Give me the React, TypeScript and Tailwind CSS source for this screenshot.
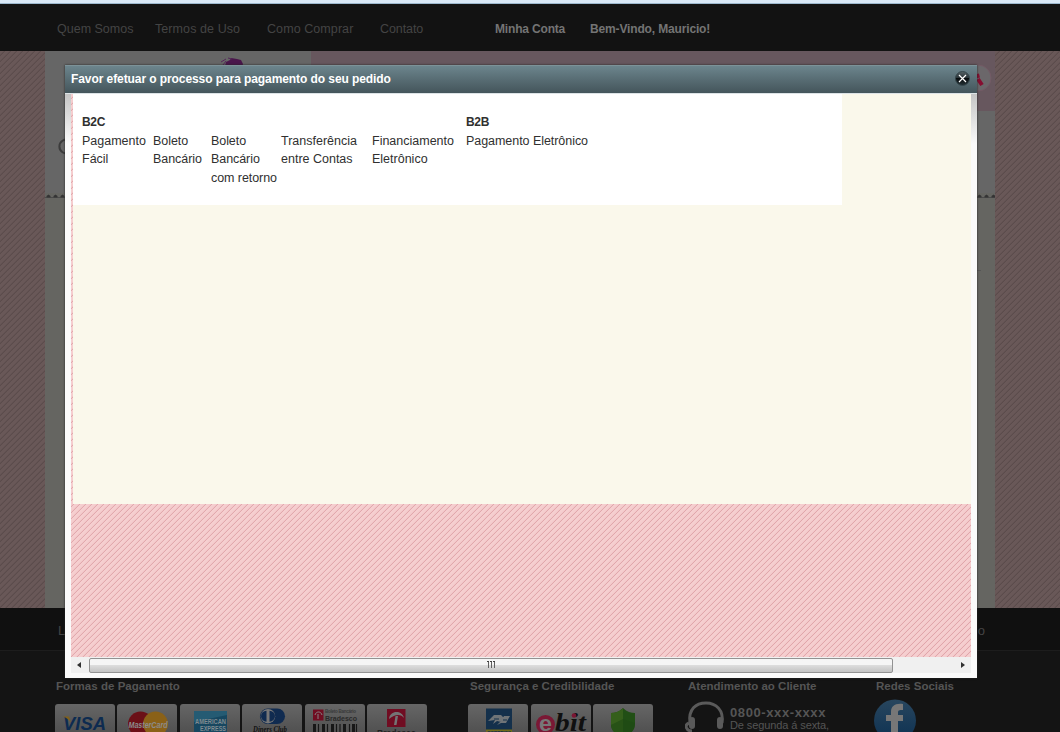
import type { ReactNode } from "react";

const darkStripes =
  "bg-[repeating-linear-gradient(135deg,#695858_0px,#695858_2.4px,#594a4a_3.4px,#695858_4.243px)]";
const pinkStripes =
  "bg-[repeating-linear-gradient(135deg,#f6d0d1_0px,#f4cccd_2.7px,#dfa3a8_3.4px,#f6d0d1_4.243px)]";

function Card({ children }: { children: ReactNode }) {
  return (
    <div className="h-[40px] w-[60px] shrink-0 overflow-hidden rounded-[3px] bg-linear-to-b from-[#666666] to-[#484848]">
      <svg width="60" height="40" viewBox="0 0 60 40" fontFamily="Liberation Sans, sans-serif">
        {children}
      </svg>
    </div>
  );
}

function Scallops() {
  return (
    <svg width="950" height="6" className="block">
      <defs>
        <pattern id="scallop" width="7" height="6" patternUnits="userSpaceOnUse">
          <path d="M0 4.5h7" stroke="#4a4a4a" />
          <path d="M1.500 4.500V3l2-1.500L5.500 3v1.500z" fill="#343434" />
        </pattern>
      </defs>
      <rect width="950" height="6" fill="url(#scallop)" />
    </svg>
  );
}

function PaymentCards() {
  return (
    <div className="flex gap-[2.4px]">
      <Card>
        <text x="8" y="25.500" fontSize="18.500" fontWeight="bold" fontStyle="italic" fill="#0d2b50" textLength="43" lengthAdjust="spacingAndGlyphs">VISA</text>
        <path d="M8 12.500h6l2 6c-2-3-5-5-8-6z" fill="#80601a" />
      </Card>
      <Card>
        <circle cx="23.500" cy="20" r="12.500" fill="#6b1017" />
        <circle cx="38.500" cy="20" r="12.500" fill="#8a6118" />
        <text x="11.500" y="23.500" fontSize="9.500" fontWeight="bold" fontStyle="italic" fill="#8c8c8c" textLength="39" lengthAdjust="spacingAndGlyphs">MasterCard</text>
      </Card>
      <Card>
        <rect x="14" y="7" width="33" height="30" fill="#174760" />
        <path d="M14 7h33v4L14 18z" fill="#255b73" />
        <text x="15" y="20" fontSize="7" fontWeight="bold" fill="#7f8b90" textLength="31" lengthAdjust="spacingAndGlyphs">AMERICAN</text>
        <text x="20" y="26.500" fontSize="7" fontWeight="bold" fill="#7f8b90" textLength="26" lengthAdjust="spacingAndGlyphs">EXPRESS</text>
      </Card>
      <Card>
        <rect x="18" y="4.500" width="25" height="15.500" rx="7.750" fill="#102b50" />
        <circle cx="26" cy="12.200" r="7.200" fill="#777777" />
        <path d="M24.500 6.700a5.500 5.500 0 0 0 0 11zM27.500 6.700a5.500 5.500 0 0 1 0 11z" fill="#102b50" />
        <text x="11" y="27.500" fontSize="8.500" fontStyle="italic" fill="#101010" fontFamily="Liberation Serif, serif" textLength="34" lengthAdjust="spacingAndGlyphs">Diners Club</text>
      </Card>
      <Card>
        <rect x="8" y="5.500" width="10.500" height="11" fill="#700d22" />
        <path d="M10 11c1-4 6-4 7 0M13 15v-5" fill="none" stroke="#858585" />
        <text x="20" y="9" fontSize="4.500" fill="#393939" textLength="31">Boleto Bancário</text>
        <text x="20" y="16.500" fontSize="8" fontWeight="bold" fill="#292929" textLength="32" lengthAdjust="spacingAndGlyphs">Bradesco</text>
        <path d="M9.500 20v20M18.500 20v20M27.500 20v20M39.500 20v20M48.500 20v20" stroke="#171717" strokeWidth="3" />
        <path d="M13.500 20v20M22.500 20v20M31.500 20v20M35 20v20M44.500 20v20M51.500 20v20" stroke="#171717" strokeWidth="1.200" />
      </Card>
      <Card>
        <rect x="20" y="5" width="18.500" height="18" fill="#700d22" />
        <path d="M22 15c1-9 13-9 15-1-3-4-9-4-15 1zM28.500 12h2.500l-1.500 9h-2.500z" fill="#747474" />
        <text x="10" y="31.500" fontSize="9" fontWeight="bold" fill="#202020" textLength="39" lengthAdjust="spacingAndGlyphs">Bradesco</text>
      </Card>
    </div>
  );
}

function SecurityCards() {
  return (
    <div className="flex gap-[2.5px]">
      <Card>
        <rect x="18" y="4.500" width="26" height="21.500" fill="#14304b" />
        <path d="M20 17l6-6h7l3 3-3 4-4-1-4 3 2-4zM29 21l4-4 3-5h6l-4 7h-5z" fill="#6f7477" />
        <path d="M26 15h5M35 16h4" stroke="#14304b" />
        <rect x="18" y="25.500" width="26" height="14" fill="#706b1a" />
        <text x="19" y="31" fontSize="5" fontWeight="bold" fill="#172e46" textLength="24">CORREIOS</text>
      </Card>
      <Card>
        <circle cx="14.500" cy="20.500" r="9.500" fill="#7a1834" />
        <text x="8" y="27" fontSize="22" fontWeight="bold" fill="#777777" textLength="13" lengthAdjust="spacingAndGlyphs">e</text>
        <text x="24" y="27" fontSize="25" fontWeight="bold" fontStyle="italic" fontFamily="Liberation Serif, serif" fill="#101010" textLength="31" lengthAdjust="spacingAndGlyphs">bit</text>
        <circle cx="43" cy="11.500" r="2.300" fill="#791633" />
      </Card>
      <Card>
        <path d="M30 4c4 4 8 5 12 5v11c0 6-4 10-12 14-8-4-12-8-12-14V9c4 0 8-1 12-5z" fill="#214f15" />
        <path d="M30 4v30c-8-4-12-8-12-14V9c4 0 8-1 12-5z" fill="#355f1b" />
        <path d="M18 21l12-6 12 4c0 7-4 11-12 15-8-4-12-8-12-13z" fill="#1e4914" opacity="0.600" />
      </Card>
    </div>
  );
}

function Backdrop() {
  return (
    <div className="flex h-full flex-col">
      <div className="h-[4px] shrink-0 border-b border-[#9db8ce] bg-[#d9e8f6]" />
      <nav className="flex h-[47px] shrink-0 items-center bg-[#121212] pb-[1px] pl-[57px] pt-[4px] text-[12.5px] text-[#444444]">
        <span className="w-[98px]">Quem Somos</span>
        <span className="w-[112px] tracking-[0.08px]">Termos de Uso</span>
        <span className="w-[113px] tracking-[0.08px]">Como Comprar</span>
        <span className="w-[115px] tracking-[-0.08px]">Contato</span>
        <span className="w-[95px] text-[12px] font-bold tracking-[-0.17px] text-[#747474]">Minha Conta</span>
        <span className="text-[12px] font-bold tracking-[-0.15px] text-[#747474]">Bem-Vindo, Mauricio!</span>
      </nav>
      <div className="flex h-[557px] shrink-0">
        <div className={`w-[45px] ${darkStripes}`} />
        <main className="flex w-[950px] flex-col bg-[#656561]">
          <div className="flex h-[142px] bg-[#666666]">
            <div className="flex w-[266px] flex-col">
              <svg width="266" height="142">
                <path d="M180 15l1-4 4-2 1-2 6 1 4 1 2 4-1 4z" fill="#4a164b" />
                <path d="M176 11l5-3M183 7l4 1M178 14l3-4" stroke="#55275a" fill="none" />
                <path d="M24 89a7 7 0 1 0 0 13" stroke="#3c3c3c" strokeWidth="2" fill="none" />
              </svg>
            </div>
            <div className="h-[60px] w-[684px] bg-[#67575e]">
              <svg width="684" height="60">
                <circle cx="667" cy="27" r="13" fill="#6b676a" stroke="#735a65" />
                <path d="M666 23l1 4M667 28l4 6" stroke="#860d30" strokeWidth="4" />
              </svg>
            </div>
          </div>
          <Scallops />
          <div className="ml-auto mr-[14px] mt-[71px] h-px w-4 bg-[#565656]" />
        </main>
        <div className={`flex-1 ${darkStripes}`} />
      </div>
      <div className="flex h-[43px] shrink-0 items-center justify-between border-b border-[#1d1d1d] bg-[#101010] pl-[58px] pr-[75px] pt-[3px] text-[13px] text-[#444444]">
        <span>L</span>
        <span>o</span>
      </div>
      <footer className="flex h-[81px] shrink-0 bg-[#141414] pl-[55px] pt-[27px] text-[11.5px] font-bold text-[#555555]">
        <section className="w-[413px]">
          <h2 className="mb-[8px] h-[18px] pl-[1px] leading-[16px] tracking-[0.03px]">Formas de Pagamento</h2>
          <PaymentCards />
        </section>
        <section className="w-[217px]">
          <h2 className="mb-[8px] h-[18px] pl-[2px] leading-[16px]">Segurança e Credibilidade</h2>
          <SecurityCards />
        </section>
        <section className="w-[189px]">
          <h2 className="h-[23px] pl-[3px] leading-[16px]">Atendimento ao Cliente</h2>
          <div className="flex">
            <svg width="45" height="31" viewBox="0 0 45 31" fill="none" stroke="#5a5a5a">
              <path d="M5 22C3 8 11 2 21 2s18 7 16 20" strokeWidth="3" />
              <path d="M7 19v6M35 19v6" strokeWidth="6" strokeLinecap="round" />
              <path d="M4 22c-5 2-3 8 3 8" strokeWidth="3" />
            </svg>
            <div className="pt-[5px]">
              <div className="text-[13px] leading-[13px] tracking-[0.6px]">0800-xxx-xxxx</div>
              <div className="whitespace-nowrap text-[11px] font-normal leading-[12px] tracking-[-0.1px]">De segunda á sexta,</div>
            </div>
          </div>
        </section>
        <section>
          <h2 className="h-[21px] pl-[2px] leading-[16px]">Redes Sociais</h2>
          <svg width="43" height="43" viewBox="0 0 43 43">
            <defs>
              <linearGradient id="fb" x2="0" y2="1">
                <stop stopColor="#28465e" />
                <stop offset="1" stopColor="#0d3152" />
              </linearGradient>
            </defs>
            <circle cx="21" cy="21.500" r="21" fill="url(#fb)" />
            <path d="M17 36V22h-5v-6h5v-3c0-6 4-9 12-8v6c-4 0-5 0-5 3v2h5v6h-5v14z" fill="#777777" />
          </svg>
        </section>
      </footer>
    </div>
  );
}

function PaymentTable() {
  return (
    <div className="flex h-[111px] w-[769px] bg-white pl-[9px] pt-[19px] text-[12.5px] leading-[18.5px] text-[#303030]">
      <section className="w-[384px]">
        <h3 className="text-[12px] font-bold tracking-[-0.3px]">B2C</h3>
        <div className="flex">
          <p className="w-[71px]">Pagamento<br />Fácil</p>
          <p className="w-[58px] tracking-[-0.06px]">Boleto<br />Bancário</p>
          <p className="w-[70px] tracking-[-0.07px]">Boleto<br />Bancário<br />com retorno</p>
          <p className="w-[91px]">Transferência<br />entre Contas</p>
          <p>Financiamento<br />Eletrônico</p>
        </div>
      </section>
      <section>
        <h3 className="text-[12px] font-bold tracking-[-0.3px]">B2B</h3>
        <p className="tracking-[-0.05px]">Pagamento Eletrônico</p>
      </section>
    </div>
  );
}

function Scrollbar() {
  return (
    <div className="flex h-[16px] items-center bg-[#f0f0f0]">
      <svg width="18" height="16"><path d="M10 5v6L6 8z" fill="#303030" /></svg>
      <div className="flex h-[15px] w-[804px] items-center justify-center rounded-[2px] border border-[#929292] bg-linear-to-b from-[#f5f5f5] from-50% via-[#dcdcdc] via-50% to-[#c3c3c3]">
        <svg width="9" height="7" className="mb-px"><path d="M1.500 0v7M4.500 0v7M7.500 0v7" stroke="#606060" /><path d="M0 .5h2M3 .5h2M6 .5h2" stroke="#404040" /></svg>
      </div>
      <svg width="78" height="16"><path d="M68 5v6l4-3z" fill="#303030" /></svg>
    </div>
  );
}

function PaymentDialog() {
  return (
    <div className="absolute left-[65px] top-[65px] flex h-[613px] w-[912px] flex-col bg-[#fafafa] shadow-[0_0_2px_#222222]">
      <header className="flex h-[28px] shrink-0 items-center justify-between border-t border-[#7c9298] bg-linear-to-b from-[#6c858d] to-[#44555b] pb-[2px] pl-[6px] pr-[7px] text-[12px] font-bold text-white">
        <h1 className="tracking-[-0.08px]">Favor efetuar o processo para pagamento do seu pedido</h1>
        <svg width="16" height="16" viewBox="0 0 16 16">
          <defs>
            <linearGradient id="close" x2="0" y2="1">
              <stop stopColor="#566266" />
              <stop offset="0.480" stopColor="#263034" />
              <stop offset="0.500" stopColor="#080c0e" />
              <stop offset="1" stopColor="#253236" />
            </linearGradient>
          </defs>
          <circle cx="8.500" cy="7.500" r="7" fill="url(#close)" stroke="#35464c" />
          <path d="M5 4l7 7M12 4l-7 7" stroke="#ffffff" strokeWidth="1.200" />
        </svg>
      </header>
      <div className="h-px shrink-0 bg-[#dce3e6]" />
      <div className="flex h-[579px]">
        <div className="w-[6px] bg-linear-to-b from-[#c5c5c5] to-[#fafafa] to-[50px]" />
        <div className="flex w-[900px] flex-col">
          <div className={`h-[563px] ${pinkStripes}`}>
            <div className="ml-[2px] h-[410px] bg-[#faf8eb]">
              <PaymentTable />
            </div>
          </div>
          <Scrollbar />
        </div>
        <div className="w-[6px] bg-linear-to-b from-[#c5c5c5] to-[#fafafa] to-[50px]" />
      </div>
    </div>
  );
}

export default function App() {
  return (
    <div className="relative h-[732px] w-[1060px] overflow-hidden bg-[#141414] font-['Liberation_Sans',Arial,sans-serif]">
      <Backdrop />
      <PaymentDialog />
    </div>
  );
}
